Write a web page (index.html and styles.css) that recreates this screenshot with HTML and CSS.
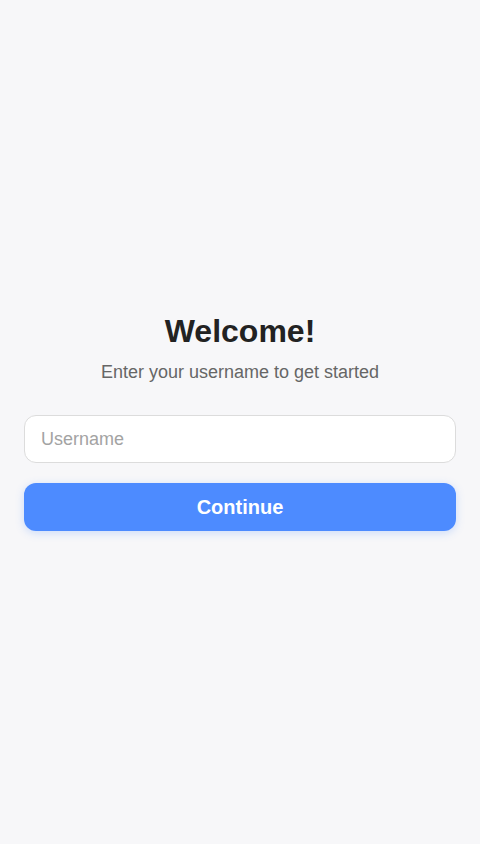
FILE: index.html
```html
<!DOCTYPE html>
<html lang="en">
<head>
<meta charset="utf-8">
<title>Welcome</title>
<link rel="stylesheet" href="styles.css">
</head>
<body>
<main class="screen">
  <section class="card">
    <h1 class="title">Welcome!</h1>
    <p class="subtitle">Enter your username to get started</p>
    <input class="field" type="text" placeholder="Username">
    <button class="btn" type="button">Continue</button>
  </section>
</main>
</body>
</html>
```
FILE: styles.css
```css
* { box-sizing: border-box; }
html, body { margin: 0; padding: 0; }
body {
  background: #f7f7f9;
  font-family: "Liberation Sans", Arial, sans-serif;
  color: #222;
}
.screen {
  min-height: 844px;
  display: flex;
  align-items: center;
  justify-content: center;
  padding: 0 24px;
}
.card {
  width: 100%;
  display: flex;
  flex-direction: column;
  align-items: stretch;
}
.title {
  margin: 0 0 12px;
  text-align: center;
  font-size: 32px;
  font-weight: 700;
  color: #222;
  line-height: 37px;
}
.subtitle {
  margin: 0 0 32px;
  text-align: center;
  font-size: 18px;
  color: #666;
  line-height: 21px;
}
.field {
  height: 48px;
  width: 100%;
  border: 1px solid #dcdcdc;
  border-radius: 12px;
  background: #fff;
  padding: 0 16px;
  font-family: inherit;
  font-size: 18px;
  color: #222;
  outline: none;
}
.field::placeholder { color: #a3a3a3; }
.btn {
  margin-top: 20px;
  height: 48px;
  width: 100%;
  border: none;
  border-radius: 12px;
  background: #4d8bff;
  color: #fff;
  font-family: inherit;
  font-size: 20px;
  font-weight: 700;
  box-shadow: 0 2px 8px rgba(77, 139, 255, 0.25);
  cursor: pointer;
}
```
